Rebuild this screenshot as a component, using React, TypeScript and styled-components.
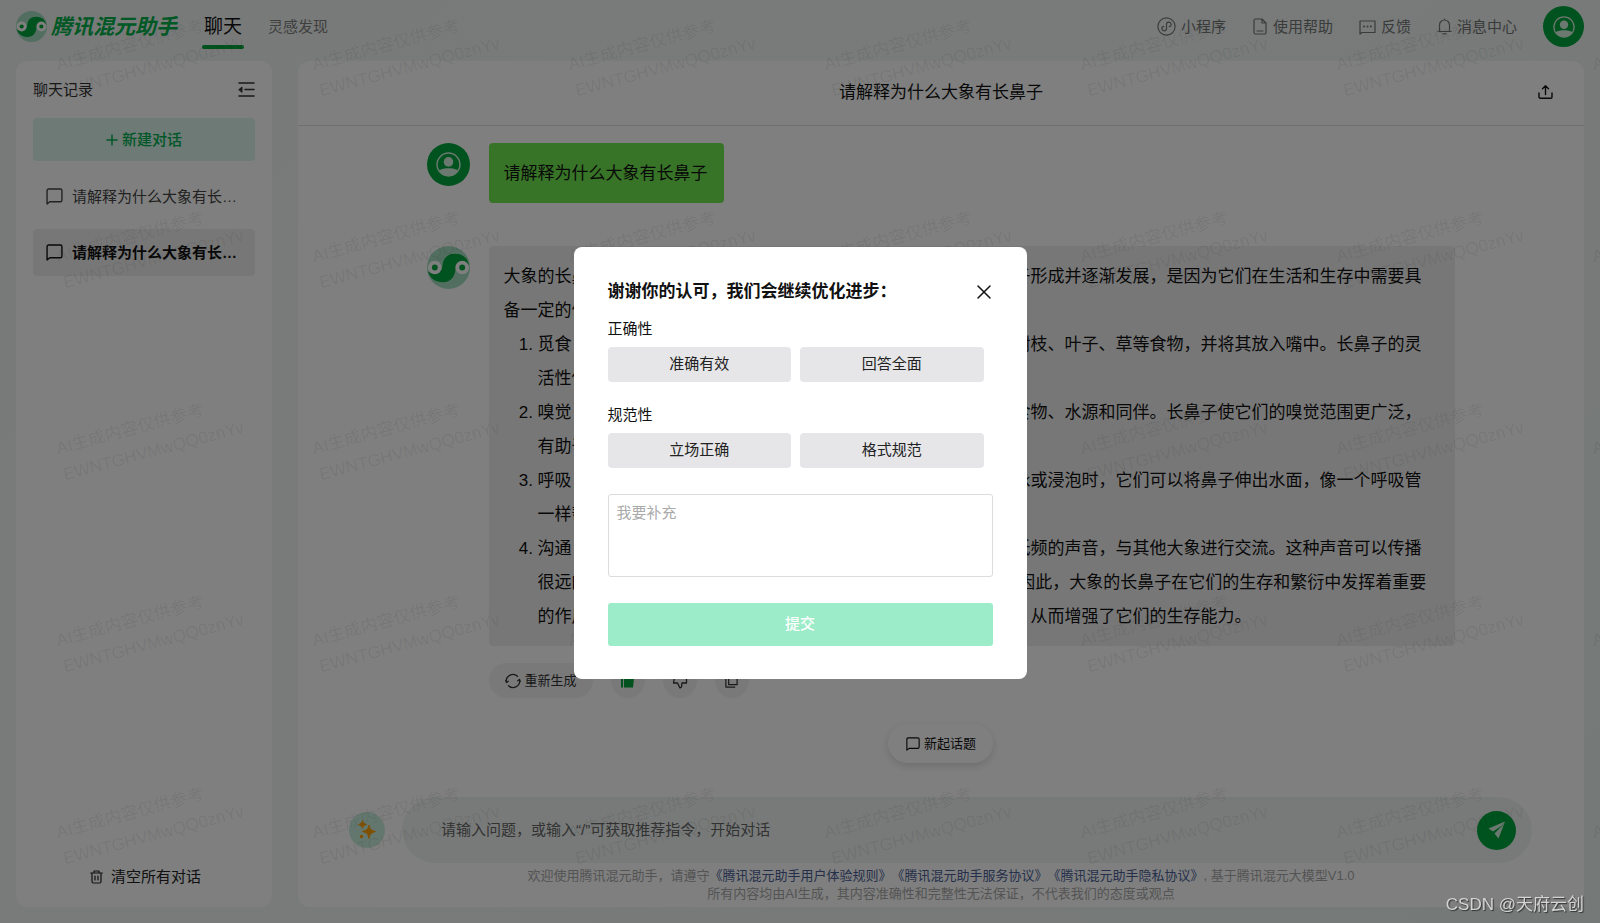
import React from 'react';
import styled, { createGlobalStyle, css } from 'styled-components';

const GlobalStyle = createGlobalStyle`
  * { box-sizing: border-box; }
  body {
    margin: 0;
    color: #111;
    font-family: "Liberation Sans", "Noto Sans CJK SC", sans-serif;
    font-size: 15px;
    line-height: 24px;
    text-spacing-trim: space-all;
  }
  button, input, textarea { font: inherit; color: inherit; }
  button { border: 0; padding: 0; background: none; cursor: pointer; }
  svg { display: block; flex: none; }
`;

const Page = styled.div`
  position: relative;
  display: flex;
  flex-direction: column;
  min-height: 100vh;
  padding: 0 16px 16px;
  background: linear-gradient(135deg, #f0f5f3 0%, #f3f6f5 40%, #eaf4f1 100%);
`;

const Header = styled.header`
  display: flex;
  align-items: center;
  height: 61px;
  padding-bottom: 8px;
`;

const Brand = styled.a`
  display: flex;
  align-items: center;
  gap: 4px;
  color: #00b04a;
  font-size: 21px;
  font-weight: 700;
  font-style: italic;
  text-decoration: none;
`;

const Tabs = styled.nav`
  display: flex;
  flex: 1;
  align-items: center;
  gap: 22px;
  margin-left: 25px;
`;

const Tab = styled.a<{ $active?: boolean }>`
  position: relative;
  padding: 0 2px;
  color: #7c7f7e;
  line-height: 36px;
  text-decoration: none;
  ${(p) =>
    p.$active &&
    css`
      color: #111;
      font-size: 19px;
      &::after {
        content: '';
        position: absolute;
        left: 0;
        right: 0;
        bottom: -4px;
        height: 4px;
        border-radius: 2px;
        background: #00a63c;
      }
    `}
`;

const Tools = styled.nav`
  display: flex;
  align-items: center;
  gap: 26px;
`;

const Tool = styled.a`
  display: flex;
  align-items: center;
  gap: 5px;
  color: #747776;
  text-decoration: none;
`;

const Avatar = styled.span<{ $size: number }>`
  display: flex;
  flex: none;
  align-items: center;
  justify-content: center;
  width: ${(p) => p.$size}px;
  height: ${(p) => p.$size}px;
  border-radius: 50%;
  background: #00a63c;
`;

const Body = styled.div`
  display: flex;
  flex: 1;
  gap: 26px;
`;

const Sidebar = styled.aside`
  display: flex;
  flex-direction: column;
  flex: none;
  width: 256px;
  padding: 17px 17px 18px;
  border-radius: 12px;
  background: #fff;
`;

const SideHead = styled.div`
  display: flex;
  align-items: center;
  justify-content: space-between;
  height: 24px;
  color: #333;
`;

const NewChat = styled.button`
  display: flex;
  align-items: center;
  justify-content: center;
  gap: 4px;
  height: 43px;
  margin: 16px 0 12px;
  border-radius: 4px;
  background: #daf5ea;
  color: #00b050;
  font-weight: 500;
`;

const History = styled.ul`
  display: flex;
  flex: 1;
  flex-direction: column;
  gap: 9px;
  margin: 0;
  padding: 0;
  list-style: none;
`;

const HistoryItem = styled.button<{ $active?: boolean }>`
  display: flex;
  align-items: center;
  gap: 9px;
  width: 100%;
  height: 47px;
  padding: 0 16px 0 13px;
  border-radius: 4px;
  background: ${(p) => (p.$active ? '#efefef' : 'transparent')};
  color: ${(p) => (p.$active ? '#111' : '#444')};
  font-weight: ${(p) => (p.$active ? 700 : 400)};
  text-align: left;
`;

const Ellipsis = styled.span`
  overflow: hidden;
  text-overflow: ellipsis;
  white-space: nowrap;
`;

const ClearAll = styled.button`
  display: flex;
  align-items: center;
  justify-content: center;
  gap: 8px;
  padding-left: 3px;
  color: #222;
`;

const Main = styled.main`
  display: flex;
  flex: 1;
  flex-direction: column;
  min-width: 0;
  padding-bottom: 4px;
  border-radius: 12px;
  background: #fff;
`;

const MainHead = styled.div`
  display: grid;
  grid-template-columns: 1fr auto 1fr;
  align-items: center;
  height: 65px;
  padding: 0 31px;
  border-bottom: 1px solid #dcdfe0;
`;

const MainTitle = styled.h1`
  grid-column: 2;
  margin: 0;
  font-size: 17px;
  font-weight: 400;
`;

const ShareButton = styled.button`
  justify-self: end;
`;

const Chat = styled.div`
  display: flex;
  flex: 1;
  flex-direction: column;
  width: 80%;
  margin: 0 auto;
  padding-top: 17px;
`;

const Message = styled.div`
  display: flex;
  align-items: flex-start;
  gap: 19px;
  margin-bottom: 43px;
  &:last-of-type { margin-bottom: 0; }
`;

const MessageBody = styled.div`
  min-width: 0;
`;

const Bubble = styled.div<{ $own?: boolean }>`
  padding: 14px ${(p) => (p.$own ? 16 : 20)}px 12px 15px;
  border-radius: 4px;
  background: ${(p) => (p.$own ? '#70e84e' : '#efefef')};
  font-size: 17px;
  line-height: 34px;
  p { margin: 0; }
  ol { margin: 0; padding-left: 34px; }
`;

const Actions = styled.div`
  display: flex;
  gap: 18px;
  margin-top: 17px;
`;

const Action = styled.button<{ $wide?: boolean }>`
  display: flex;
  align-items: center;
  justify-content: center;
  gap: 4px;
  width: ${(p) => (p.$wide ? 104 : 34)}px;
  height: 35px;
  border-radius: 18px;
  background: #f3f3f3;
  color: #333;
  font-size: 13px;
`;

const NewTopic = styled.button`
  display: flex;
  align-items: center;
  justify-content: center;
  align-self: center;
  gap: 4px;
  width: 105px;
  height: 39px;
  margin: 26px 0 34px;
  border-radius: 20px;
  background: #fff;
  box-shadow: 0 3px 8px rgba(0, 0, 0, 0.14);
  font-size: 13px;
`;

const Composer = styled.form`
  display: flex;
  align-items: center;
  gap: 17px;
  padding: 0 52px 0 51px;
`;

const Spark = styled.button`
  display: flex;
  flex: none;
  align-items: center;
  justify-content: center;
  width: 36px;
  height: 36px;
  border-radius: 50%;
  background: #c9efdf;
`;

const InputBar = styled.div`
  display: flex;
  flex: 1;
  align-items: center;
  height: 66px;
  padding: 0 16px 0 39px;
  border-radius: 33px;
  background: #f0f5f3;
`;

const Prompt = styled.input`
  flex: 1;
  min-width: 0;
  padding: 0;
  border: 0;
  outline: 0;
  background: none;
  &::placeholder { color: #666; opacity: 1; }
`;

const Send = styled.button`
  display: flex;
  align-items: center;
  justify-content: center;
  width: 39px;
  height: 39px;
  border-radius: 50%;
  background: #00a63c;
`;

const Legal = styled.footer`
  margin-top: 4px;
  color: #a9a9a9;
  font-size: 13px;
  line-height: 18px;
  text-align: center;
  p { margin: 0; }
  a { color: #4b5f96; text-decoration: none; }
`;

const Watermarks = styled.div`
  position: absolute;
  inset: 0;
  display: grid;
  grid-template-columns: repeat(7, 256px);
  grid-auto-rows: 192px;
  padding-left: 60px;
  overflow: hidden;
  pointer-events: none;
`;

const Mark = styled.div`
  align-self: start;
  justify-self: start;
  margin-top: 51px;
  color: rgba(0, 0, 0, 0.08);
  font-size: 17px;
  font-weight: 400;
  line-height: 27px;
  white-space: nowrap;
  transform: rotate(-15deg);
  transform-origin: 0 50%;
`;

const Overlay = styled.div`
  position: fixed;
  inset: 0;
  display: flex;
  align-items: center;
  justify-content: center;
  padding-top: 2px;
  background: rgba(0, 0, 0, 0.5);
`;

const Dialog = styled.form`
  display: flex;
  flex-direction: column;
  width: 453px;
  padding: 33px 34px;
  border-radius: 8px;
  background: #fff;
`;

const DialogHead = styled.div`
  display: flex;
  align-items: center;
  justify-content: space-between;
  margin-bottom: 10px;
  h2 { margin: 0; font-size: 17px; font-weight: 700; }
`;

const Choices = styled.fieldset`
  min-width: 0;
  margin: 0 0 18px;
  padding: 0;
  border: 0;
  legend { padding: 0; line-height: 30px; }
`;

const ChoiceRow = styled.div`
  display: grid;
  grid-template-columns: 1fr 1fr;
  gap: 9px;
  padding: 3px 9px 0 0;
`;

const Choice = styled.button`
  height: 35px;
  border-radius: 4px;
  background: #e6e6e8;
  color: #222;
`;

const Extra = styled.textarea`
  height: 83px;
  margin: 8px 0 26px;
  padding: 6px 8px;
  border: 1px solid #dcdcdc;
  border-radius: 3px;
  resize: none;
  outline: 0;
  &::placeholder { color: #aaa; opacity: 1; }
`;

const Submit = styled.button`
  height: 43px;
  border-radius: 3px;
  background: #9decc9;
  color: #fff;
  font-weight: 500;
`;

const Credit = styled.div`
  position: fixed;
  right: 16px;
  bottom: 6px;
  color: #d4d4d4;
  font-size: 17px;
  text-shadow: 1px 1px 1px #333;
`;

type IconProps = { width: number; height?: number; box?: string; stroke?: number; children: React.ReactNode };

const Line = ({ width, height = width, box = '0 0 16 16', stroke = 1.2, children }: IconProps) => (
  <svg
    width={width}
    height={height}
    viewBox={box}
    fill="none"
    stroke="currentColor"
    strokeWidth={stroke}
    strokeLinecap="round"
    strokeLinejoin="round"
    aria-hidden="true"
  >
    {children}
  </svg>
);

const Logo = ({ size }: { size: number }) => (
  <svg width={size} height={size} viewBox="0 0 44 44" aria-hidden="true">
    <circle cx="22" cy="22" r="22" fill="#a5dcc0" />
    <path
      d="M1 26C3 33 9 37 16 37c9 0 12-6 13-12 1-5 3-8 7-8 3 0 5 1 7 3C42 12 36 8 29 8c-9 0-12 5-13 11-1 6-3 9-8 9-3 0-5-1-7-2Z"
      fill="#00a63c"
    />
    <circle cx="8" cy="22" r="7" fill="#fff" />
    <circle cx="36" cy="22" r="7" fill="#fff" />
    <circle cx="8" cy="22" r="3" fill="#00a63c" />
    <circle cx="36" cy="22" r="3" fill="#00a63c" />
  </svg>
);

const Person = ({ size }: { size: number }) => (
  <svg width={size} height={size} viewBox="0 0 24 24" aria-hidden="true">
    <circle cx="12" cy="12" r="11" fill="none" stroke="#d6f2e0" strokeWidth="1.4" />
    <circle cx="12" cy="9.5" r="4.6" fill="#d6f2e0" />
    <path d="M2.6 18C5 16 8.5 15.600 12 15.600s7 .4 9.400 2.400A11 11 0 0 1 12 23a11 11 0 0 1-9.400-5Z" fill="#d6f2e0" />
  </svg>
);

const Speech = ({ size }: { size: number }) => (
  <Line width={size} stroke={1.3}>
    <path d="M1 15V2.500A1.500 1.500 0 0 1 2.500 1h11A1.500 1.500 0 0 1 15 2.500v9a1.500 1.500 0 0 1-1.500 1.500H3.500Z" />
  </Line>
);

const history = ['请解释为什么大象有长鼻子', '请解释为什么大象有长鼻子'];

const reasons = [
  '觅食：大象的长鼻子可以帮助它们够到高处的嫩叶，轻松地折取树枝、叶子、草等食物，并将其放入嘴中。长鼻子的灵活性使它们能够获取更多的食物。',
  '嗅觉：大象的长鼻子上有许多嗅觉感受器，能够帮助它们寻找到食物、水源和同伴。长鼻子使它们的嗅觉范围更广泛，有助于它们在复杂的环境中生存。',
  '呼吸：长鼻子也是大象的呼吸器官。当它们在较深的河水当中游泳或浸泡时，它们可以将鼻子伸出水面，像一个呼吸管一样帮助它们呼吸。',
  '沟通：大象还会利用长鼻子来进行沟通。它们可以通过鼻子发出低频的声音，与其他大象进行交流。这种声音可以传播很远的距离，使得大象能够与数公里以外的同伴保持密切联系。 因此，大象的长鼻子在它们的生存和繁衍中发挥着重要的作用，帮助它们更好地适应不断变化的自然环境和各种栖息地，从而增强了它们的生存能力。',
];

const choices = [
  { title: '正确性', options: ['准确有效', '回答全面'] },
  { title: '规范性', options: ['立场正确', '格式规范'] },
];

export default function App() {
  return (
    <>
      <GlobalStyle />
      <Page>
        <Header>
          <Brand href="#">
            <Logo size={31} />
            腾讯混元助手
          </Brand>
          <Tabs>
            <Tab href="#chat" $active>聊天</Tab>
            <Tab href="#discover">灵感发现</Tab>
          </Tabs>
          <Tools>
            <Tool href="#mini">
              <Line width={19} box="0 0 19 19">
                <circle cx="9.5" cy="9.5" r="8.6" />
                <path d="M9.500 11.500a2.300 2.300 0 1 1-2.800-2.200M9.500 11.500v-4a2.300 2.300 0 1 1 2.800 2.200" />
              </Line>
              小程序
            </Tool>
            <Tool href="#help">
              <Line width={16} height={17} box="0 0 16 17">
                <path d="M2 2.500A1.500 1.500 0 0 1 3.500 1H10l4 4v9.500a1.500 1.500 0 0 1-1.500 1.500h-9A1.500 1.500 0 0 1 2 14.500ZM10 1v4h4M5 13h6" />
              </Line>
              使用帮助
            </Tool>
            <Tool href="#feedback">
              <Line width={17} height={16} box="0 0 17 16">
                <path d="M1 15V2h15v11.500H3Z" />
                <path d="M5 7.500h.2M8.400 7.500h.2M11.800 7.500h.2" strokeWidth="1.8" />
              </Line>
              反馈
            </Tool>
            <Tool href="#messages">
              <Line width={15} height={17} box="0 0 15 17">
                <path d="M1 13.500h13M2.500 13.500V7a5 5 0 0 1 10 0v6.500M6 15.800h3M7.500 1v1" />
              </Line>
              消息中心
            </Tool>
            <Avatar $size={41}><Person size={22} /></Avatar>
          </Tools>
        </Header>

        <Body>
          <Sidebar>
            <SideHead>
              聊天记录
              <button type="button" aria-label="收起">
                <Line width={17} height={16} box="0 0 17 16" stroke={1.6}>
                  <path d="M1 1h15M7 7.500h9M1 14h15" />
                  <path d="M1 7.500l3-2.500v5Z" fill="currentColor" strokeWidth="1" />
                </Line>
              </button>
            </SideHead>
            <NewChat type="button">
              <Line width={12} box="0 0 12 12" stroke={1.5}><path d="M6 1v10M1 6h10" /></Line>
              新建对话
            </NewChat>
            <History>
              {history.map((text, i) => (
                <li key={i}>
                  <HistoryItem type="button" $active={i === 1}>
                    <Speech size={17} />
                    <Ellipsis>{text}</Ellipsis>
                  </HistoryItem>
                </li>
              ))}
            </History>
            <ClearAll type="button">
              <Line width={13} height={14} box="0 0 13 14">
                <path d="M.7 3h11.600M4 3V1h5v2M2 3v8.500A1.500 1.500 0 0 0 3.500 13h6a1.500 1.500 0 0 0 1.500-1.500V3M5 6v4M8 6v4" />
              </Line>
              清空所有对话
            </ClearAll>
          </Sidebar>

          <Main>
            <MainHead>
              <MainTitle>请解释为什么大象有长鼻子</MainTitle>
              <ShareButton type="button" aria-label="分享">
                <Line width={15} height={17} box="0 0 15 17" stroke={1.4}>
                  <path d="M7.500 9.500V1M4.500 3.800l3-3 3 3M1 8v4a1.200 1.200 0 0 0 1.200 1.200h10.600A1.200 1.200 0 0 0 14 12V8" />
                </Line>
              </ShareButton>
            </MainHead>
            <Chat>
              <Message>
                <Avatar $size={43}><Person size={25} /></Avatar>
                <Bubble $own>请解释为什么大象有长鼻子</Bubble>
              </Message>
              <Message>
                <Logo size={43} />
                <MessageBody>
                  <Bubble>
                    <p>大象的长鼻子是由于长期进化过程中适应环境的结果。它们这种长鼻子形成并逐渐发展，是因为它们在生活和生存中需要具备一定的优势和能力。以下是几个主要原因：</p>
                    <ol>
                      {reasons.map((reason) => <li key={reason}>{reason}</li>)}
                    </ol>
                  </Bubble>
                  <Actions>
                    <Action type="button" $wide>
                      <Line width={16} stroke={1.3}>
                        <path d="M1.500 9.500A6.600 6.600 0 0 1 12.500 3.300M14.500 6.500A6.600 6.600 0 0 1 3.500 12.700M1.500 9.500l-.8-2M1.500 9.500l1.800-1.200M14.500 6.500l.8 2M14.500 6.500l-1.800 1.200" />
                      </Line>
                      重新生成
                    </Action>
                    <Action type="button" aria-label="赞">
                      <svg width="15" height="15" viewBox="0 0 15 15" fill="#00a63c" aria-hidden="true">
                        <path d="M1 6h2v8.500H1ZM4 6l3-5.500c2 0 2.300 1.500 1.800 5H14l-1 9H4Z" />
                      </svg>
                    </Action>
                    <Action type="button" aria-label="踩">
                      <Line width={16} stroke={1.3}>
                        <path d="M3 1.500h11.500V10H10l-.5 4-1.500 1-2.500-5H1.500Z" />
                      </Line>
                    </Action>
                    <Action type="button" aria-label="复制">
                      <Line width={15} stroke={1.3}>
                        <path d="M5 1h9v11.500H5ZM2 3.500V15h9.500" />
                      </Line>
                    </Action>
                  </Actions>
                </MessageBody>
              </Message>
              <NewTopic type="button">
                <Speech size={14} />
                新起话题
              </NewTopic>
            </Chat>
            <Composer>
              <Spark type="button" aria-label="推荐指令">
                <svg width="18" height="20" viewBox="0 0 18 20" fill="#ffa000" aria-hidden="true">
                  <path d="M11 5c.8 4 2 5.200 6.500 6.500C13 12.800 11.800 14 11 18.500 10.200 14 9 12.800 4.500 11.500 9 10.200 10.200 9 11 5Z" stroke="#ffa000" />
                  <path d="M4.500.5C5 3 5.800 3.800 8.500 4.500 5.800 5.200 5 6 4.500 8.500 4 6 3.200 5.200.5 4.500 3.200 3.800 4 3 4.500.5Z" stroke="#ffa000" />
                  <circle cx="3.5" cy="16.5" r="1.8" />
                </svg>
              </Spark>
              <InputBar>
                <Prompt aria-label="问题" placeholder="请输入问题，或输入“/”可获取推荐指令，开始对话" />
                <Send type="button" aria-label="发送">
                  <svg width="18" height="18" viewBox="0 0 18 18" fill="#d6f2e0" aria-hidden="true">
                    <path d="M17 .5.500 7.500 5 10.500 14 4.500ZM17 .5 10.500 17.500 6.500 12.500 14.500 4.500Z" />
                  </svg>
                </Send>
              </InputBar>
            </Composer>
            <Legal>
              <p>
                欢迎使用腾讯混元助手，请遵守
                <a href="#rules">《腾讯混元助手用户体验规则》</a>
                <a href="#service">《腾讯混元助手服务协议》</a>
                <a href="#privacy">《腾讯混元助手隐私协议》</a>
                , 基于腾讯混元大模型V1.0
              </p>
              <p>所有内容均由AI生成，其内容准确性和完整性无法保证，不代表我们的态度或观点</p>
            </Legal>
          </Main>
        </Body>

        <Watermarks aria-hidden="true">
          {Array.from({ length: 35 }, (_, i) => (
            <Mark key={i}>
              AI生成内容仅供参考
              <br />
              EWNTGHVMwQQ0znYv
            </Mark>
          ))}
        </Watermarks>
      </Page>

      <Overlay>
        <Dialog role="dialog" aria-labelledby="feedback-title">
          <DialogHead>
            <h2 id="feedback-title">谢谢你的认可，我们会继续优化进步：</h2>
            <button type="button" aria-label="关闭">
              <Line width={18} box="0 0 18 18" stroke={1.5}><path d="M3 3l12 12M15 3L3 15" /></Line>
            </button>
          </DialogHead>
          {choices.map(({ title, options }) => (
            <Choices key={title}>
              <legend>{title}</legend>
              <ChoiceRow>
                {options.map((option) => <Choice type="button" key={option}>{option}</Choice>)}
              </ChoiceRow>
            </Choices>
          ))}
          <Extra aria-label="补充" placeholder="我要补充" />
          <Submit type="button">提交</Submit>
        </Dialog>
      </Overlay>
      <Credit>CSDN @天府云创</Credit>
    </>
  );
}
